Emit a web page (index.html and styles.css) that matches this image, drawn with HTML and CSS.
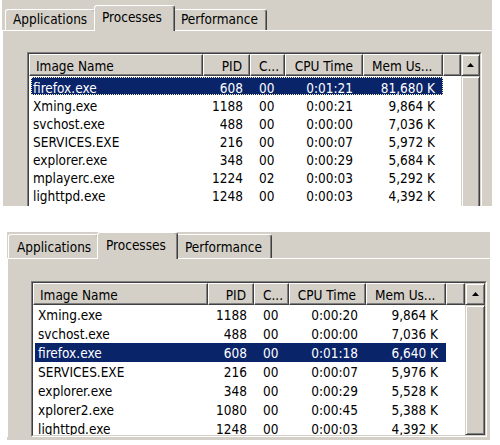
FILE: index.html
```html
<!DOCTYPE html>
<html>
<head>
    <title>Task Manager - Processes</title>
    <link rel="stylesheet" href="styles.css">
</head>
<body>

<div class="shot shot-top">
    <div class="tabs">
        <div class="tab tab-apps">Applications</div>
        <div class="tab tab-procs active">Processes</div>
        <div class="tab tab-perf">Performance</div>
    </div>
    <div class="page">
        <div class="listview">
            <div class="list-inner">
                <div class="list-main">
                    <div class="header">
                        <div class="col col-name">Image Name</div>
                        <div class="col col-pid">PID</div>
                        <div class="col col-cpu">C...</div>
                        <div class="col col-time">CPU Time</div>
                        <div class="col col-mem">Mem Us...</div>
                        <div class="col"></div>
                    </div>
                    <div class="rows">
                        <div class="row selected focus"><span class="c-name">firefox.exe</span><span class="c-pid">608</span><span class="c-cpu">00</span><span class="c-time">0:01:21</span><span class="c-mem">81,680 K</span></div>
                        <div class="row"><span class="c-name">Xming.exe</span><span class="c-pid">1188</span><span class="c-cpu">00</span><span class="c-time">0:00:21</span><span class="c-mem">9,864 K</span></div>
                        <div class="row"><span class="c-name">svchost.exe</span><span class="c-pid">488</span><span class="c-cpu">00</span><span class="c-time">0:00:00</span><span class="c-mem">7,036 K</span></div>
                        <div class="row"><span class="c-name">SERVICES.EXE</span><span class="c-pid">216</span><span class="c-cpu">00</span><span class="c-time">0:00:07</span><span class="c-mem">5,972 K</span></div>
                        <div class="row"><span class="c-name">explorer.exe</span><span class="c-pid">348</span><span class="c-cpu">00</span><span class="c-time">0:00:29</span><span class="c-mem">5,684 K</span></div>
                        <div class="row"><span class="c-name">mplayerc.exe</span><span class="c-pid">1224</span><span class="c-cpu">02</span><span class="c-time">0:00:03</span><span class="c-mem">5,292 K</span></div>
                        <div class="row"><span class="c-name">lighttpd.exe</span><span class="c-pid">1248</span><span class="c-cpu">00</span><span class="c-time">0:00:03</span><span class="c-mem">4,392 K</span></div>
                    </div>
                </div>
                <div class="vscroll">
                    <div class="btn-up">
                        <svg width="7" height="4" viewBox="0 0 7 4"><polygon points="3.5,0 7,4 0,4" fill="#000"/></svg>
                    </div>
                    <div class="thumb"></div>
                </div>
            </div>
        </div>
    </div>
</div>

<div class="shot shot-bottom">
    <div class="tabs">
        <div class="tab tab-apps">Applications</div>
        <div class="tab tab-procs active">Processes</div>
        <div class="tab tab-perf">Performance</div>
    </div>
    <div class="page">
        <div class="listview">
            <div class="list-inner">
                <div class="list-main">
                    <div class="header">
                        <div class="col col-name">Image Name</div>
                        <div class="col col-pid">PID</div>
                        <div class="col col-cpu">C...</div>
                        <div class="col col-time">CPU Time</div>
                        <div class="col col-mem">Mem Us...</div>
                        <div class="col"></div>
                    </div>
                    <div class="rows">
                        <div class="row"><span class="c-name">Xming.exe</span><span class="c-pid">1188</span><span class="c-cpu">00</span><span class="c-time">0:00:20</span><span class="c-mem">9,864 K</span></div>
                        <div class="row"><span class="c-name">svchost.exe</span><span class="c-pid">488</span><span class="c-cpu">00</span><span class="c-time">0:00:00</span><span class="c-mem">7,036 K</span></div>
                        <div class="row selected"><span class="c-name">firefox.exe</span><span class="c-pid">608</span><span class="c-cpu">00</span><span class="c-time">0:01:18</span><span class="c-mem">6,640 K</span></div>
                        <div class="row"><span class="c-name">SERVICES.EXE</span><span class="c-pid">216</span><span class="c-cpu">00</span><span class="c-time">0:00:07</span><span class="c-mem">5,976 K</span></div>
                        <div class="row"><span class="c-name">explorer.exe</span><span class="c-pid">348</span><span class="c-cpu">00</span><span class="c-time">0:00:29</span><span class="c-mem">5,528 K</span></div>
                        <div class="row"><span class="c-name">xplorer2.exe</span><span class="c-pid">1080</span><span class="c-cpu">00</span><span class="c-time">0:00:45</span><span class="c-mem">5,388 K</span></div>
                        <div class="row"><span class="c-name">lighttpd.exe</span><span class="c-pid">1248</span><span class="c-cpu">00</span><span class="c-time">0:00:03</span><span class="c-mem">4,392 K</span></div>
                    </div>
                </div>
                <div class="vscroll">
                    <div class="btn-up">
                        <svg width="7" height="4" viewBox="0 0 7 4"><polygon points="3.5,0 7,4 0,4" fill="#000"/></svg>
                    </div>
                    <div class="thumb"></div>
                </div>
            </div>
        </div>
    </div>
</div>

</body>
</html>
```

FILE: styles.css
```css
body {
    margin: 0;
    background-color: #fff;
    font-family: "DejaVu Sans Condensed", "DejaVu Sans", sans-serif;
    font-stretch: condensed;
    font-size: 13.5px;
    color: #000;
}
.shot {
    background-color: #d4d0c8;
    overflow: hidden;
}
.shot-top {
    --c1: 174px;
    --c2: 47px;
    --c3: 35px;
    --c4: 78px;
    --c5: 80px;
    --c6: 18px;
    --sb: 19px;
    --row: 18px;
    --shift: 2px;
    margin-left: 2px;
    width: 490px;
    height: 206px;
}
.shot-bottom {
    --c1: 175px;
    --c2: 46px;
    --c3: 35px;
    --c4: 77px;
    --c5: 80px;
    --c6: 19px;
    --sb: 20px;
    --row: 19px;
    --shift: 1px;
    margin: 26px 0 0 7px;
    width: 483px;
    height: 208px;
}

/* tab strip */
.tabs {
    display: flex;
    align-items: flex-end;
}
.shot-top .tabs {
    height: 30px;
    padding-left: 3px;
}
.shot-bottom .tabs {
    height: 26px;
    padding-left: 1px;
}
.tab {
    box-sizing: border-box;
    border: 1px solid #fff;
    border-bottom: none;
    border-right-color: #404040;
    box-shadow: inset -1px 0 #808080;
    border-radius: 3px 3px 0 0;
    background-color: #d4d0c8;
    line-height: 16px;
    white-space: nowrap;
}
.tab.active {
    position: relative;
    z-index: 1;
    margin: 0 -2px -1px;
}
.shot-top .tab {
    height: 21px;
    padding: 1px 0 0 7px;
}
.shot-top .tab.active {
    height: 26px;
    padding-top: 3px;
}
.shot-top .tab-apps { width: 91px; }
.shot-top .tab-procs { width: 81px; }
.shot-top .tab-perf { width: 94px; }
.shot-bottom .tab {
    height: 24px;
    padding: 4px 0 0 8px;
}
.shot-bottom .tab.active {
    height: 27px;
}
.shot-bottom .tab-apps { width: 91px; }
.shot-bottom .tab-procs { width: 81px; }
.shot-bottom .tab-perf { width: 96px; }

/* tab page */
.page {
    border-top: 1px solid #fff;
    border-left: 1px solid #fff;
}
.shot-top .page {
    padding: 21px 0 0 24px;
}
.shot-bottom .page {
    padding: 22px 0 0 23px;
}

/* list view */
.listview {
    box-sizing: border-box;
    border: 1px solid;
    border-color: #808080 #fff #fff #808080;
}
.shot-top .listview {
    width: 455px;
    height: 180px;
}
.shot-bottom .listview {
    width: 456px;
    height: 156px;
}
.list-inner {
    box-sizing: border-box;
    height: 100%;
    border: 1px solid;
    border-color: #404040 #d4d0c8 #d4d0c8 #404040;
    background-color: #fff;
    display: flex;
    overflow: hidden;
}
.list-main {
    flex: 1;
}
.header {
    display: grid;
    grid-template-columns: var(--c1) var(--c2) var(--c3) var(--c4) var(--c5) var(--c6);
    height: 22px;
}
.col {
    box-sizing: border-box;
    background-color: #d4d0c8;
    border: 1px solid;
    border-color: #fff #404040 #404040 #fff;
    box-shadow: inset -1px -1px #808080;
    padding-top: 2px;
    line-height: 19px;
    white-space: nowrap;
    overflow: hidden;
}
.col-name { padding-left: 6px; }
.col-pid { text-align: right; padding-right: 7px; }
.col-cpu { padding-left: 8px; }
.col-time { text-align: right; padding-right: 9px; }
.col-mem { padding-left: 8px; }

.shot-top .rows {
    padding-top: 1px;
}
.row {
    display: grid;
    grid-template-columns: calc(var(--c1) - 2px) var(--c2) var(--c3) var(--c4) var(--c5);
    box-sizing: border-box;
    width: max-content;
    margin-left: 2px;
    height: var(--row);
    padding-top: calc(var(--shift) * 2);
    line-height: calc(var(--row) - var(--shift) * 2);
    white-space: nowrap;
}
.row.selected {
    background-color: #0a246a;
    color: #fff;
}
.row.focus {
    outline: 1px dotted #f0f0b8;
    outline-offset: -1px;
}
.c-name { padding-left: 2px; }
.c-pid { text-align: right; padding-right: 7px; }
.c-cpu { padding-left: 9px; }
.c-time { text-align: right; padding-right: 10px; }
.c-mem { text-align: right; padding-right: 8px; }
.shot-bottom .c-name { padding-left: 3px; }
.shot-bottom .c-time { padding-right: 8px; }

/* vertical scroll bar */
.vscroll {
    width: var(--sb);
    display: flex;
    flex-direction: column;
}
.btn-up,
.thumb {
    box-sizing: border-box;
    background-color: #d4d0c8;
    border: 1px solid;
    border-color: #d4d0c8 #404040 #404040 #d4d0c8;
    box-shadow: inset 1px 1px #fff, inset -1px -1px #808080;
}
.btn-up {
    height: 22px;
    display: flex;
    align-items: center;
    justify-content: center;
}
.thumb {
    flex: 1;
}
```
